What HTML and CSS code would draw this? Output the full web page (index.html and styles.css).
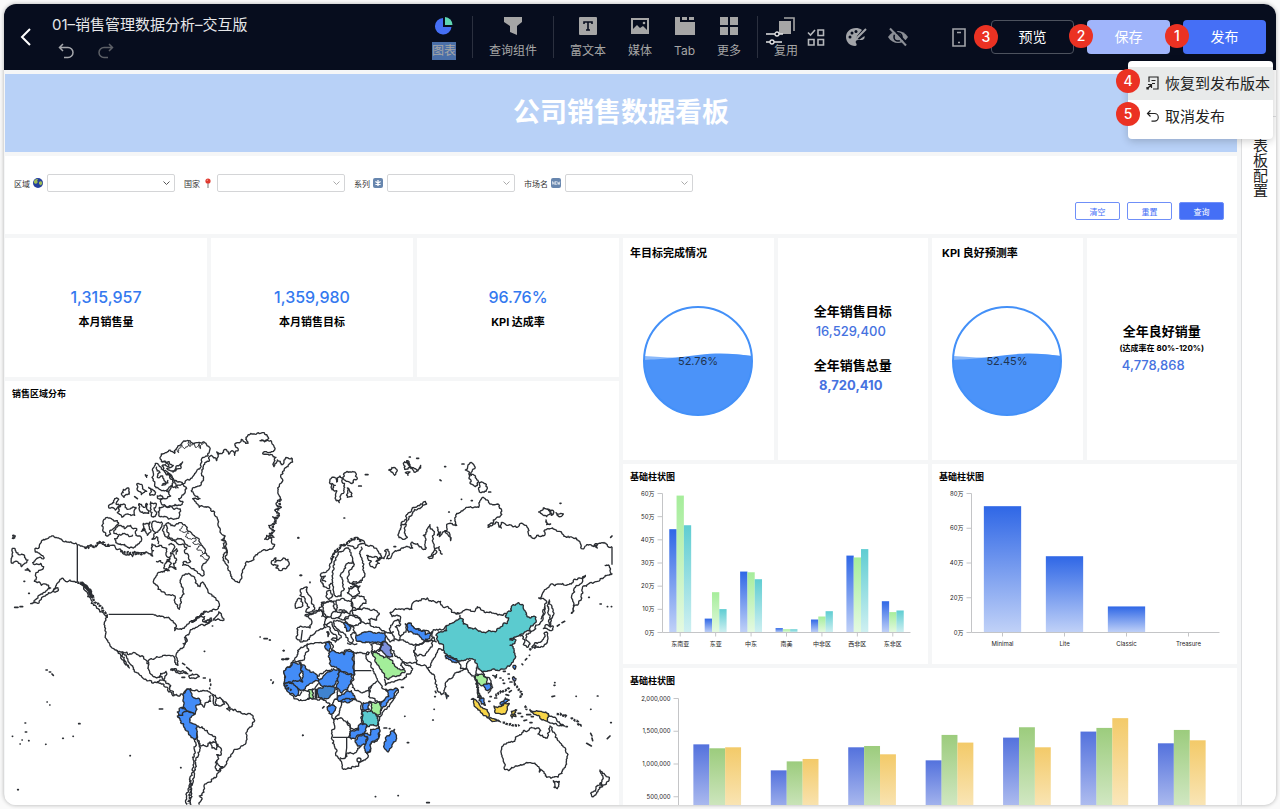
FILE: index.html
```html
<!DOCTYPE html>
<html lang="zh-CN">
<head>
    <meta charset="UTF-8">
    <meta name="viewport" content="width=device-width, initial-scale=1.0">
    <title>01–销售管理数据分析–交互版</title>
    <link rel="stylesheet" href="styles.css">
</head>
<body>
<div class="frame">
    <header class="topbar">
        <button class="back" aria-label="返回"><svg width="12" height="18" viewBox="0 0 12 18"><path d="M10 1 2 9l8 8" fill="none" stroke="#fff" stroke-width="2"/></svg></button>
        <div class="doc">
            <h1>01–销售管理数据分析–交互版</h1>
            <div class="history">
                <button aria-label="撤销"><svg width="16" height="16" viewBox="0 0 16 16"><path d="M5 1 1.500 4.500 5 8M2 4.500h8a5 5 0 0 1 0 10H6" fill="none" stroke="#a6a8ad" stroke-width="1.500"/></svg></button>
                <button aria-label="重做"><svg width="16" height="16" viewBox="0 0 16 16"><path d="M11 1l3.500 3.500L11 8M14 4.500H6a5 5 0 0 0 0 10h4" fill="none" stroke="#5d6067" stroke-width="1.500"/></svg></button>
            </div>
        </div>

        <nav class="tools">
            <div class="group">
                <button class="tool"><svg width="20" height="20" viewBox="0 0 20 20"><path d="M9 2a8.300 8.300 0 1 0 8.500 9H9z" fill="#456ff6"/><path d="M11 1a8 8 0 0 1 7.500 8H11z" fill="#5fd6b4"/></svg><span class="selected">图表</span></button>
            </div>
            <div class="group">
                <button class="tool"><svg width="20" height="20" viewBox="0 0 20 20"><path d="M1 1h18v5l-5 4v9l-7-3v-6L1 6z" fill="#a6a6a6"/></svg><span>查询组件</span></button>
            </div>
            <div class="group">
                <button class="tool"><svg width="20" height="20" viewBox="0 0 20 20"><rect x="1" y="1" width="18" height="18" rx="1" fill="#a6a6a6"/><path d="M6 8V6h8v2M10 6v8M8 14h4" fill="none" stroke="#070d1e" stroke-width="1.600"/></svg><span>富文本</span></button>
                <button class="tool"><svg width="20" height="20" viewBox="0 0 20 20"><rect x="2" y="3" width="16" height="14" fill="none" stroke="#a6a6a6" stroke-width="2"/><path d="M3 13l4-4 3 3 3-2 4 4v3H3z" fill="#a6a6a6"/><circle cx="14" cy="7" r="1.300" fill="#a6a6a6"/></svg><span>媒体</span></button>
                <button class="tool"><svg width="20" height="20" viewBox="0 0 20 20"><path d="M0 1h5v5h15v13H0zM7 1h5v3H7zM14 1h5v3h-5z" fill="#a6a6a6"/></svg><span>Tab</span></button>
                <button class="tool"><svg width="20" height="20" viewBox="0 0 20 20"><path d="M1 1h8v8H1zM11 1h8v8h-8zM1 11h8v8H1zM11 11h8v8h-8z" fill="#a6a6a6"/></svg><span>更多</span></button>
            </div>
            <div class="group reuse">
                <button class="tool"><svg width="20" height="20" viewBox="0 0 20 20"><path d="M3 5h12v13H3z" fill="#a6a6a6"/><path d="M8 2h10v13" fill="none" stroke="#a6a6a6" stroke-width="1.600"/></svg><span>复用</span></button>
                <svg class="sliders" width="17" height="14" viewBox="0 0 17 14"><path d="M0 3h9M13 3h4M0 11h4M8 11h8" stroke="#e4e4e4" stroke-width="1.300"/><circle cx="11" cy="3" r="2" fill="none" stroke="#e4e4e4" stroke-width="1.300"/><circle cx="6" cy="11" r="2" fill="none" stroke="#e4e4e4" stroke-width="1.300"/></svg>
            </div>
            <div class="extras">
                <button aria-label="批量"><svg width="18" height="18" viewBox="0 0 18 18"><path d="M1 4.500 3.500 7 8 2M11 2h5.500v5.500H11zM1.500 11.500H7V17H1.500zM11 11.500h5.500V17H11z" fill="none" stroke="#b6b8bc" stroke-width="1.600"/></svg></button>
                <button aria-label="主题"><svg width="22" height="20" viewBox="0 0 22 20"><path d="M11 1C5 1 1 5 1 10s4 9 9 9c2 0 2-2 1-3s0-3 2-3h3c3 0 4-2 3.500-4l-5 3.500-3-.5.500-3L17 3c-2-1.500-4-2-6-2z" fill="#a2a4a9"/><g fill="#070d1e"><circle cx="5" cy="10" r="1.500"/><circle cx="7" cy="6" r="1.500"/><circle cx="11" cy="4.500" r="1.500"/></g><path d="M21 2 13 10l-1.500 2" fill="none" stroke="#a2a4a9" stroke-width="2"/></svg></button>
                <button aria-label="隐藏"><svg width="22" height="20" viewBox="0 0 22 20"><path d="M1 10c5-8 15-8 20 0-5 8-15 8-20 0z" fill="#8c8f96"/><circle cx="11" cy="10" r="4" fill="none" stroke="#070d1e" stroke-width="1.600"/><path d="M5 .5 21 17.500" stroke="#070d1e" stroke-width="2"/><path d="M3 1.500 19 18.500" stroke="#8c8f96" stroke-width="2"/></svg></button>
            </div>
        </nav>

        <div class="actions">
            <button class="device" aria-label="移动端"><svg width="14" height="19" viewBox="0 0 14 19"><path d="M1 1h12v17H1zM5 4.500h4M6 14.500h2" fill="none" stroke="#a2a4a9" stroke-width="1.600"/></svg></button>
            <button class="action preview">预览<b class="badge">3</b></button>
            <button class="action save">保存<b class="badge">2</b></button>
            <button class="action publish">发布<b class="badge">1</b></button>
        </div>
    </header>

    <div class="menu">
        <button class="menu-item active"><svg width="14" height="14" viewBox="0 0 14 14"><path d="M3 6V1h9v12H7M5.500 4.500h4M6 7.500h3M1 13l4-4M2 8.500h3.500V12M1 11v2h2" fill="none" stroke="#222" stroke-width="1.200"/></svg>恢复到发布版本<b class="badge">4</b></button>
        <button class="menu-item"><svg width="14" height="14" viewBox="0 0 14 14"><path d="M4.500 1.500 1.500 4.500l3 3M2 4.500h6.500a3.800 3.800 0 0 1 0 7.600H5.500" fill="none" stroke="#222" stroke-width="1.200"/></svg>取消发布<b class="badge">5</b></button>
    </div>

    <div class="workspace">
        <main class="board">
            <h2 class="banner">公司销售数据看板</h2>

            <form class="filters card">
                <div class="fields">
                    <div class="field">
                        <label for="region">区域</label>
                        <svg width="10" height="10" viewBox="0 0 10 10"><circle cx="5" cy="5" r="5" fill="#243f9c"/><path d="M1 3c1-2 3-2 4-2l-1 2 1 1-2 2-2-1zM6 4l2-1 1.500 2L8 7.500 6 6z" fill="#9ebc55"/></svg>
                        <span class="pick dark"><select id="region"><option></option></select><svg width="7" height="5" viewBox="0 0 7 5"><path d="M.5.500l3 3 3-3" fill="none" stroke="currentColor"/></svg></span>
                    </div>
                    <div class="field">
                        <label for="country">国家</label>
                        <svg width="10" height="10" viewBox="0 0 10 10"><path d="M5 4v6" stroke="#777"/><circle cx="5" cy="3" r="2.600" fill="#e0392f"/><circle cx="4.300" cy="2.300" r=".8" fill="#f58c84"/></svg>
                        <span class="pick"><select id="country"><option></option></select><svg width="7" height="5" viewBox="0 0 7 5"><path d="M.5.500l3 3 3-3" fill="none" stroke="currentColor"/></svg></span>
                    </div>
                    <div class="field">
                        <label for="series">系列</label>
                        <svg width="10" height="10" viewBox="0 0 10 10"><rect width="10" height="10" rx="2" fill="#6786ae"/><path d="M5 2v6M2.400 3.500l5.200 3M7.600 3.500l-5.200 3" stroke="#fff" stroke-width="1.300"/></svg>
                        <span class="pick"><select id="series"><option></option></select><svg width="7" height="5" viewBox="0 0 7 5"><path d="M.5.500l3 3 3-3" fill="none" stroke="currentColor"/></svg></span>
                    </div>
                    <div class="field">
                        <label for="market">市场名</label>
                        <svg width="10" height="10" viewBox="0 0 10 10"><rect width="10" height="10" rx="2" fill="#6786ae"/><path d="M1.500 6.500v-3l1.700 3v-3M5.800 3.500H4.300v3h1.500M4.300 5h1.300M6.600 3.500l.5 3 .6-2 .6 2 .5-3" fill="none" stroke="#fff" stroke-width=".6"/></svg>
                        <span class="pick"><select id="market"><option></option></select><svg width="7" height="5" viewBox="0 0 7 5"><path d="M.5.500l3 3 3-3" fill="none" stroke="currentColor"/></svg></span>
                    </div>
                </div>
                <div class="form-actions">
                    <button type="button">清空</button>
                    <button type="reset">重置</button>
                    <button type="button" class="primary">查询</button>
                </div>
            </form>

            <div class="columns">
                <div class="column">
                    <div class="kpis">
                        <section class="card kpi"><strong>1,315,957</strong><span>本月销售量</span></section>
                        <section class="card kpi"><strong>1,359,980</strong><span>本月销售目标</span></section>
                        <section class="card kpi"><strong>96.76%</strong><span>KPI 达成率</span></section>
                    </div>
                    <section class="card map-card">
                        <h3>销售区域分布</h3>
                        <svg class="map" viewBox="5 405 614 404">
                            <!-- Americas -->
                            <g transform="translate(0 420) scale(.33333)">
                                <polyline points="37,384 37,430"/>
                                <polyline points="37,384 48,396 56,404 74,408 84,420 72,432 64,440 54,426 46,424 38,432"/>
                                <polygon points="38,346 46,348 44,354 37,355"/>
                                <polyline points="232,374 210,366 192,365 176,354 153,350 140,357 124,364 118,378 105,386 106,396 120,402 132,415 118,412 108,418 98,428 104,434 122,430 131,440 122,450 108,458 108,470 103,484 112,488 118,486 124,496 136,492 146,496 152,504 140,512 128,522 114,534 92,551 104,548 124,538 142,524 156,516 166,504 172,490 180,478 190,476 196,484 210,480 232,487"/>
                                <polygon points="160,514 174,504 172,514"/>
                                <polyline class="heavy" points="240,489 252,495 262,506 270,522 280,532"/>
                                <polyline class="islands" points="232,487 246,493 256,503 270,521 280,535 288,549 298,557 310,573 324,587"/>
                                <polyline points="250,500 262,518 272,534 274,550 286,556 294,566 300,576 312,582 322,594"/>
                                <path d="M232 374V487M326 583H460"/>
                                <polyline points="460,583 480,588 500,592 518,602 526,612 524,632 540,626 560,616 574,602 588,596 604,586 618,576"/>
                                <polyline points="320,584 318,600 314,620 316,646 324,666 336,684 352,692 362,706 372,728 388,744 378,726 366,706 366,696 380,712 392,734 410,758 430,776 452,782 470,788 490,792 502,802 512,816 524,826"/>
                                <polyline points="350,692 368,696 386,704 404,698 420,710 428,708 440,722 446,732"/>
                                <polyline class="islands" points="254,384 272,376 288,378 298,366 314,374 330,376"/>
                                <polyline class="islands" points="362,392 384,396 400,398 420,400 438,396"/>
                                <polyline points="232,374 246,378 258,384 272,376 288,378 298,364 312,374 330,376 346,382 362,388 368,400 392,402 398,410 404,394 424,398 440,396 452,402 458,408 456,372 468,380 484,376 496,384 498,400 508,412 504,424 496,430 492,446 508,452 500,450 482,456 468,470 462,490 474,508 492,516 512,526 526,532 528,552 538,568 544,548 540,534 552,522 550,508 544,494 544,474 556,462 572,464 584,472 586,488 600,500 608,486 616,496 624,514 636,528 648,540 658,552 652,568 636,574 616,574 602,584 588,592 574,606 584,604 602,590 614,590 608,604 624,600 636,594"/>
                                <polygon points="656,576 664,586 672,600 654,596 640,600 650,588"/>
                                <polyline points="636,596 614,606 636,602 622,612 600,616 584,626 570,636 556,650 560,664 552,678 534,692 528,706 534,724 534,736 524,726 520,708 504,706 486,710 470,710 454,716 446,732 448,752 458,768 476,772 482,760 498,754 498,766 492,780 498,790 512,796 512,812 522,824 534,828 548,822"/>
                                <polyline points="470,788 480,780 492,782 486,770 478,774"/>
                                <polyline points="552,652 562,660 556,672 548,670"/>
                                <polygon points="512,750 528,746 548,752 564,762 546,760 526,752"/>
                                <polygon points="566,768 584,764 598,770 582,774"/>
                                <!-- Arctic islands -->
                                <polygon points="480,112 496,98 510,90 524,100 530,84 544,72 566,62 590,68 612,66 628,82 628,96 612,112 604,128 600,146 584,160 576,174 560,180 548,192 534,186 520,176 506,160 490,150 486,138 506,140 498,128 484,124"/>
                                <polyline points="484,124 508,126 520,136 500,146 522,152 548,126 538,146 518,158"/>
                                <polyline class="tick" points="530,84 536,98 546,74 554,86 566,64 570,80 582,68 586,82 598,70 602,86 612,68"/>
                                <polygon points="466,130 480,140 494,156 510,168 520,186 512,200 496,212 478,208 464,194 456,172 458,146"/>
                                <polyline points="470,140 480,158 472,172 488,168 498,188 486,196 504,180"/>
                                <polyline points="500,160 514,178 528,192 536,204"/>
                                <polygon points="500,214 514,196 528,204 546,192 560,206 552,222 536,236 548,244 540,256 518,258 486,254 482,240 500,236 512,228"/>
                                <polygon points="478,262 500,260 522,268 540,266 538,288 516,296 486,290 474,276"/>
                                <polygon points="326,262 344,236 356,238 348,252 360,256 346,270 336,262"/>
                                <polygon points="370,208 386,204 388,222 372,232 364,222"/>
                                <polygon points="356,262 372,252 382,268 408,262 404,286 384,282 366,292 352,278"/>
                                <polygon points="410,192 428,202 440,214 424,224 412,210"/>
                                <polygon points="446,202 458,208 466,222 450,226"/>
                                <polygon points="416,252 430,262 440,250 446,280 428,276 418,268"/>
                                <polygon points="452,246 468,250 462,264 470,282 456,290 450,272"/>
                                <polygon points="472,228 486,228 488,236 474,236"/>
                                <polygon points="436,164 442,166 440,172"/>
                                <polygon points="312,298 330,294 352,302 356,312 340,326 332,342 320,348 308,330"/>
                                <polygon points="344,330 362,316 374,326 392,316 410,326 408,346 424,352 418,370 400,384 378,378 356,372 344,356 356,346 342,340"/>
                                <polyline points="356,344 374,340 388,350 398,344"/>
                                <polygon points="430,310 450,306 452,330 442,346 434,326 424,334"/>
                                <polygon points="460,304 484,306 478,330 466,340 456,322"/>
                                <polyline points="464,340 456,358 470,350 474,372"/>
                                <polygon points="492,316 506,308 524,318 540,308 554,314 562,330 576,342 590,352 600,368 612,384 620,402 628,412 618,428 606,438 612,456 608,468 594,460 582,446 566,438 548,436 552,424 572,424 566,408 554,398 560,382 548,372 536,374 520,360 504,356 492,342"/>
                                <polyline class="tick" points="548,318 538,330 566,340 556,350 588,356 578,368 602,376 590,388 616,400 600,408 622,420"/>
                                <polyline points="500,314 500,330 504,350 524,360 540,356 556,372 572,380"/>
                                <polygon points="500,424 512,398 520,404 530,420 520,430 528,448 506,444 514,430"/>
                                <polyline points="506,376 514,370 524,382 516,396 530,386 528,404"/>
                                <polyline points="468,424 482,422 490,430"/>
                                <!-- Greenland, Iceland -->
                                <polygon points="718,488 704,482 692,468 684,450 676,430 670,404 682,398 668,384 680,372 664,360 676,348 660,336 654,316 652,296 644,276 632,266 616,260 598,262 588,246 578,236 600,236 584,226 574,212 588,200 604,192 610,176 604,160 610,140 626,124 634,106 650,122 650,96 668,98 680,90 686,102 696,92 704,106 714,92 706,70 724,58 744,70 738,52 760,42 782,40 800,44 806,56 780,62 812,62 822,78 824,90 812,98 788,100 812,104 828,112 822,140 832,120 844,134 858,112 874,114 878,126 864,140 848,154 842,170 846,186 838,200 834,214 838,228 844,240 828,250 844,262 824,270 838,280 830,296 818,290 828,310 806,316 824,332 808,340 822,352 800,346 794,358 812,354 824,374 808,388 786,392 766,406 750,424 736,430 732,446 724,466"/>
                                <polyline points="674,350 670,370 680,390 676,410 686,430"/>
                                <polyline class="islands" points="838,240 834,262 834,284 824,306 818,324 806,350"/>
                                <polygon points="816,422 828,414 824,426 838,422 850,414 864,418 868,432 858,446 842,452 828,444 834,436 820,436"/>
                                <!-- South America -->
                                <polyline points="548,824 556,812 572,806 582,812 600,814 622,812 636,822 650,834 668,840 680,850 690,868 706,868 722,876 742,882 758,886 764,902 754,920 742,932 740,954 730,976 708,988 694,1002 682,1022 670,1042 656,1056 650,1070 634,1078 622,1088 612,1100 612,1116 598,1128 606,1138 598,1154"/>
                                <polyline points="586,958 584,990 580,1020 576,1050 570,1080 564,1110 560,1154"/>
                                <polyline points="592,960 598,980 594,1010 586,1050 578,1090 576,1130 574,1154"/>
                                <polyline class="islands" points="572,1080 570,1100 568,1125 566,1150"/>
                                <polygon class="blue" points="548,824 558,812 572,808 576,822 582,834 598,836 600,852 588,856 586,880 570,876 556,866 546,862 552,848"/>
                                <polygon class="blue" points="540,864 556,868 560,876 548,886 536,890 532,876"/>
                                <polygon class="blue" points="532,888 548,886 560,874 572,878 586,882 570,894 570,908 592,918 590,940 588,958 566,944 552,922 540,900"/>
                                <polyline points="600,852 612,862 618,848 632,844 632,826"/>
                                <polyline points="636,824 640,850 650,856 660,858 674,852 668,840"/>
                                <polyline points="650,836 650,856"/>
                                <polyline points="692,862 680,866 690,874"/>
                                <polyline points="592,918 606,920 622,932 636,944 646,950 648,966 630,966 624,978 600,978 592,962 590,940"/>
                                <polyline points="628,970 636,984 650,988 648,966 664,988 664,1002 650,1004 656,1016 646,1030"/>
                                <polygon points="650,1022 668,1040 656,1052 646,1044"/>
                                <path class="specks" d="M138 750h4M148 756h4M156 762l4 4M478 867h10M141 846h1M149 855h1M75 909h2M76 936h4M86 962h1M60 972h1M137 973h1M188 955h2M219 949h1M236 911h4M390 1007h1M542 1043h1M53 1109h2M37 949h1M66 960h1M780 651h1M792 656h10M808 660h1M846 718h6M858 716h8M850 692h2M812 780h2M820 786l-2 4M613 694h1M637 618h1M894 353h2M900 466h3M908 946h1M630 778v6M632 792v4M629 804v2M610 774h6M548 730l6 4M560 742l8 6M570 752h4M546 772h8M44 562h10M60 560h8M76 450h10M72 484h2M86 520h2M82 446l8 8M404 230l8 6"/>
                            </g>
                            <!-- Northern Eurasia -->
                            <g transform="translate(270 420) scale(.33333)">
                                <polygon points="180,178 194,172 200,186 210,168 216,186 224,202 214,222 208,248 196,232 200,212 184,204"/>
                                <polyline points="184,190 196,196 190,210"/>
                                <polygon points="222,160 240,156 258,160 262,176 250,188 232,184 218,174"/>
                                <polygon points="232,204 240,216 246,230 232,232"/>
                                <polygon points="356,150 372,142 382,152 374,166 364,156"/>
                                <polygon points="400,130 414,126 420,140 404,148"/>
                                <polygon points="424,142 440,150 452,136 448,144 432,156"/>
                                <polygon points="406,158 420,156 414,166"/>
                                <polygon points="410,122 420,134 424,146"/>
                                <polygon points="586,150 600,128 614,146 604,166"/>
                                <polygon points="598,166 616,168 626,186 616,200 600,190"/>
                                <polygon points="628,188 640,188 652,206 640,216 628,216"/>
                                <polygon points="384,346 392,316 410,284 430,262 452,252 466,244 470,252 450,266 428,276 414,300 408,318 404,334 412,352 398,358"/>
                                <polyline points="394,316 410,314"/>
                                <polygon points="806,276 820,264 840,272 848,284 830,290 818,284"/>
                                <polygon points="836,268 852,276 844,286"/>
                                <polygon points="858,278 880,282 872,290"/>
                                <polygon points="828,300 842,312 830,314"/>
                                <polyline points="286,376 302,376 320,386 332,402 326,418 306,412 290,406 304,424 300,436 314,444 328,430 318,424 342,416 344,392 354,388 358,402 350,416 376,392 400,384 428,384 426,366 446,376 466,388 468,360 460,346 480,314 490,332 488,360 492,380 498,400 488,414 474,412 486,408 494,388 508,380 518,402"/>
                                <polyline points="500,320 502,346 512,336 508,350 524,332 540,344 542,362 534,344 526,338 530,322 532,312 560,316 558,290 580,270 604,262 626,262 640,232 652,240 660,252 684,252 694,268 690,290 670,300 654,322 680,306 694,324 694,308 714,316 740,322 752,310 768,316 776,344 786,354 800,346 824,346 822,334 840,326 868,334 890,352 918,354 932,372 934,386 950,374 980,376 996,368 1026,380"/>
                                <path d="M1026 380V434"/>
                                <polygon points="972,376 982,372 982,384"/>
                                <polyline points="1004,436 1018,438 1026,462 1000,474 982,484 960,488 940,498 938,520 926,546 904,580 910,556 906,524 916,502 936,488 946,466 930,474 912,478 904,492 888,496 870,492 838,498 820,516 806,534 830,544 824,560 820,580 812,598"/>
                                <polygon points="838,540 846,560 848,590 842,620 836,600 836,570"/>
                                <!-- Scandinavia -->
                                <polyline class="islands" points="186,420 192,400 206,386 222,374 240,362 258,356 276,362"/>
                                <polyline points="152,462 164,458 180,440 186,418 196,396 214,376 232,366 256,352 276,360 288,376 270,372 252,384 232,378"/>
                                <polyline points="152,462 154,486 160,500 176,506 186,490 190,512 198,530 214,528 220,494 212,470 222,450 236,428 250,426 248,440 236,456 232,476 240,490 262,488 284,466 278,440 272,410 274,380"/>
                                <polyline points="186,490 188,452 198,420 206,396 228,384 240,396 246,426"/>
                                <polyline points="152,470 166,468 156,480 168,486"/>
                                <polyline points="276,486 246,492 270,498 240,500"/>
                                <polygon points="170,516 182,512 188,528 176,538 168,530"/>
                                <polygon points="236,504 252,498 266,500 268,520 256,528 240,524 232,518"/>
                                <polygon points="94,506 112,502 110,516 124,534 132,556 134,568 108,576 118,562 106,546 102,530 90,526"/>
                                <polygon points="78,546 94,536 98,552 92,562 76,564"/>
                                <!-- Central Europe -->
                                <polyline points="104,584 124,582 146,568 156,550 174,544 198,544 222,536 242,544 246,570 240,582 210,578 200,570 198,544"/>
                                <polyline points="146,568 158,580 154,590"/>
                                <polygon points="246,536 262,526 282,530 288,550 270,566 248,562"/>
                                <polyline points="360,576 376,566 402,570 426,568 434,544 472,534 496,546 512,544 520,562 556,580 580,572 616,572 622,560 640,572 680,582 708,580"/>
                                <path class="specks" d="M286 164h8M266 198h8M418 111h3M440 115h6M524 140h3M510 180l3 2M576 132h6M574 238h1M604 242h3M536 276h2M542 302h1M372 380h5M656 216h6M870 250h3M1022 352l4-4M84 354h2M92 466h3M120 486v2M222 294h2M956 532h2M990 552h4M1012 560h1M1024 560h1"/>
                            </g>
                            <!-- Africa, Asia, Oceania -->
                            <g transform="translate(270 600) scale(.33333)">
                                <polyline points="104,46 122,44 132,34 154,30 174,50 164,66 168,82 150,88 144,92 122,106 112,122 92,126 82,118 84,82 120,84 124,60 104,46"/>
                                <path d="M97 90l-4 32"/>
                                <polygon points="162,74 182,66 188,80 206,98 214,112 204,120 200,108 182,94 172,80"/>
                                <polygon points="184,118 200,116 196,126"/>
                                <polygon points="170,96 176,96 174,110"/>
                                <polyline points="190,62 196,80 212,96 228,112 238,126 250,122 242,104 258,100 250,80 230,72 214,66 190,62"/>
                                <polyline points="232,128 250,132 262,132"/>
                                <polygon points="154,8 190,4 198,34 182,50 160,46"/>
                                <polyline points="182,50 206,54 214,40 230,34 206,32"/>
                                <polyline points="206,54 220,60 236,56"/>
                                <polygon points="226,52 246,46 262,52 272,70 250,80 234,72"/>
                                <polygon points="246,34 270,28 300,30 328,40 320,60 296,58 300,70 282,68 270,54 250,46"/>
                                <polygon class="blue" points="222,68 236,74 240,90 230,94 224,82"/>
                                <polyline points="300,70 318,80 340,92 356,98 372,96"/>
                                <polygon class="blue" points="258,104 276,98 300,94 324,98 346,98 350,110 346,124 320,128 300,130 280,128 264,124"/>
                                <polygon points="362,76 384,58 392,72 376,80 386,94 392,108 388,122 372,118 368,104 358,86"/>
                                <polyline points="360,36 366,50 392,52 388,68"/>
                                <polyline points="392,108 408,96 406,72 424,70 444,86 466,92 484,98 500,88 520,88 532,76"/>
                                <polygon class="blue" points="406,72 424,70 444,86 460,92 466,104 488,98 480,108 464,122 448,108 428,98 412,88"/>
                                <polyline points="390,120 430,136 462,124 494,112"/>
                                <polygon points="436,140 466,124 494,122 480,146 466,166 442,168 432,152"/>
                                <polyline points="350,112 360,126 374,122"/>
                                <polyline points="350,128 364,146 374,166 392,178 410,190 440,192 434,166 432,150"/>
                                <polyline points="440,192 460,196 472,206 484,188 496,170 506,146 520,150"/>
                                <polyline points="482,100 492,114 500,126"/>
                                <polygon class="purple" points="340,124 350,128 364,146 368,170 352,170 326,154 334,140"/>
                                <polyline points="304,132 340,124 330,150 304,156 302,132"/>
                                <polygon class="green" points="304,154 314,156 308,166"/>
                                <polygon class="green" points="306,162 320,156 352,172 368,182 374,198 400,208 404,218 378,230 356,238 344,232 330,206 316,186"/>
                                <polyline points="344,236 346,256 372,246 404,236 424,216 428,206 410,196 398,188 392,196 404,208"/>
                                <!-- Africa -->
                                <polygon class="land" points="112,132 142,128 172,126 184,128 184,148 204,160 220,158 232,150 252,158 282,160 298,158 290,164 300,186 312,216 322,240 344,268 384,268 374,294 360,314 340,334 326,350 324,368 328,384 328,410 318,424 302,434 302,452 292,462 282,480 266,498 244,506 220,508 216,492 204,472 194,440 186,410 190,388 192,362 186,346 178,330 180,312 166,302 148,300 132,296 112,298 88,302 72,296 60,280 46,266 42,250 44,226 48,206 64,188 74,178 84,162 88,148 102,140"/>
                                <polygon class="blue" points="48,206 66,190 92,188 96,246 60,246 44,250 44,226"/>
                                <polygon class="blue" points="94,194 142,230 146,242 120,250 106,266 90,272 74,262 58,266 46,250 60,246 98,246"/>
                                <polygon class="blue" points="42,250 60,250 84,268 86,286 76,290 50,272"/>
                                <polyline class="islands" points="46,256 56,266 64,272"/>
                                <polyline points="74,182 84,184 94,194"/>
                                <polyline points="84,184 116,152 112,134"/>
                                <polyline points="142,230 186,206"/>
                                <polyline points="100,268 136,262 146,250"/>
                                <polygon class="blue" points="146,240 160,228 190,206 206,208 206,230 196,252 172,260 152,256"/>
                                <polygon class="blue" points="176,160 186,152 204,158 222,164 230,152 250,158 252,224 244,222 206,206 186,200 178,190"/>
                                <polygon class="blue" points="166,130 178,126 182,140 180,156 172,152"/>
                                <polygon class="blue" points="206,208 244,222 242,250 232,270 212,278 200,262 206,230"/>
                                <polygon class="blue" points="204,288 222,282 244,272 258,298 226,304 206,304"/>
                                <polygon class="steel" points="146,264 170,258 196,262 190,280 172,296 160,300 144,292"/>
                                <polygon class="green" points="114,272 128,270 130,296 114,298"/>
                                <path d="M136 266v30M140 266v30M96 274l-8 14"/>
                                <polyline points="196,262 204,288 190,316 172,320"/>
                                <polygon class="blue" points="172,320 190,316 196,330 186,342 174,332"/>
                                <path d="M252 158V212H304"/>
                                <polyline points="252,212 242,250 260,272 300,276 306,256 322,244"/>
                                <polyline points="306,256 296,290 316,304 348,300 368,280 346,270"/>
                                <polygon class="blue" points="350,272 382,266 370,294 350,314 334,332 332,310 356,290"/>
                                <polygon class="green" points="300,304 330,306 332,330 324,346 300,334"/>
                                <polygon class="blue" points="280,308 298,304 298,328 276,330"/>
                                <polygon class="teal" points="276,334 300,334 324,350 322,376 298,380 280,368 274,350"/>
                                <polyline points="214,304 258,300 276,312 276,360 280,376 250,388 236,370 220,360 192,358 208,334 214,304"/>
                                <polyline points="232,362 240,388 236,414"/>
                                <path d="M188 412h48l20 4"/>
                                <polygon class="blue" points="240,394 266,390 272,370 290,376 288,392 270,404 254,416 240,412"/>
                                <polygon class="blue" points="256,420 278,404 292,410 290,434 272,440 258,428"/>
                                <polygon class="blue" points="328,382 326,406 304,426 302,448 290,460 286,434 292,410 280,400 300,406 302,388"/>
                                <path d="M230 414v30l-4 30"/>
                                <polyline points="210,472 226,474 230,460 250,462 272,440"/>
                                <circle cx="267" cy="480" r="6"/>
                                <polygon class="blue" points="374,388 378,404 366,440 354,456 344,446 348,412 362,402"/>
                                <!-- South and East Asia -->
                                <polyline points="472,206 478,212 486,222 494,232 500,262 514,284 524,266 528,246 552,226 576,212 590,206 600,220 614,230 620,262 624,240"/>
                                <polygon class="blue" points="526,278 536,288 530,296"/>
                                <polygon class="blue" points="526,166 548,176 568,182 566,188 546,186 528,176"/>
                                <polyline points="568,188 572,206 588,208 590,190 602,180"/>
                                <polygon class="teal" points="498,106 530,92 532,76 554,64 570,46 580,58 580,72 602,84 622,90 650,96 680,92 694,80 712,70 716,54 706,48 712,36 724,32 730,14 746,8 760,16 766,34 780,54 798,52 796,68 782,78 782,94 764,96 748,106 732,112 720,116 720,120 738,120 728,132 720,136 732,150 736,168 724,192 708,206 684,212 666,208 654,212 630,210 622,192 616,180 596,178 578,182 560,176 536,168 520,150 516,132 502,122"/>
                                <polyline points="570,42 562,38 556,40"/>
                                <polygon class="teal" points="668,226 680,224 676,234"/>
                                <polygon class="blue" points="730,196 738,200 734,208"/>
                                <polyline points="748,106 760,110 764,120 760,134 774,142 780,130 768,116 770,102 790,92 812,66 818,50 824,20"/>
                                <polyline class="islands" points="778,150 788,140 804,142"/>
                                <polyline points="788,138 804,128 820,118 822,100 830,96 834,116 828,132 806,142 790,142"/>
                                <polygon points="820,86 832,74 850,80 840,92"/>
                                <polyline points="618,200 618,214 626,224 620,250 622,280 630,296"/>
                                <polygon class="green" points="616,224 634,222 652,236 650,250 632,256 622,246"/>
                                <polygon class="green" points="620,262 626,278 634,292 624,286"/>
                                <polyline points="634,212 648,232 664,250 668,262 654,280"/>
                                <polygon class="blue" points="640,254 662,252 658,270 646,268"/>
                                <polygon class="blue" points="628,290 642,300 646,316 634,312"/>
                                <polygon class="yellow" points="604,298 620,302 640,326 658,346 652,354 630,332 612,312"/>
                                <polygon class="yellow" points="656,354 680,360 692,366 664,362"/>
                                <polygon class="yellow" points="672,318 692,320 706,308 718,310 712,330 704,342 682,340"/>
                                <polygon class="blue" points="690,312 706,294 718,300 708,308 694,318"/>
                                <polygon class="yellow" points="724,334 740,330 732,340 738,350 728,344 726,354"/>
                                <polygon class="yellow" points="780,328 800,332 832,340 832,364 816,360 806,346 790,340"/>
                                <polyline points="832,340 856,352 868,366 884,378 856,370 832,364"/>
                                <polygon class="purple" points="730,230 738,236 734,250"/>
                                <polyline class="islands" points="734,250 742,262 748,274 756,288 748,290"/>
                                <polyline class="islands" points="676,288 690,278 706,272 718,262"/>
                                <polyline class="islands" points="698,368 722,372 748,374"/>
                                <polyline class="islands" points="860,342 876,348 890,344"/>
                                <polyline class="islands" points="764,318 768,330"/>
                                <polyline class="islands" points="904,352 920,362 936,376"/>
                                <!-- Oceania -->
                                <polygon points="696,440 708,432 734,424 744,408 756,398 774,392 784,382 806,384 812,392 804,402 820,412 832,414 838,390 840,378 848,396 856,412 872,430 886,444 894,464 890,492 876,520 864,532 842,534 826,522 812,508 808,516 806,500 788,490 762,494 740,498 716,512 704,508 702,488 694,460"/>
                                <polygon points="850,542 868,544 862,566 852,562"/>
                                <polygon points="990,510 1004,524 1018,532 1010,546 998,556 998,538"/>
                                <polygon points="992,548 998,560 980,580 966,590 962,580 978,566"/>
                                <path class="specks" d="M470 608h8M412 428h4M404 349h1M98 406h1M488 360h2M492 328h1M494 290h2M496 274l2 4M394 262h6M342 384h8M358 386h2M384 587h1M316 590h1M0 120h1M40 152h2M36 178h6M46 178h8M918 289h1M982 288h2M962 328h1M1022 368h2M852 256h3M854 248h1M846 290l8-2M756 192l2 2M766 180l4-4M778 166h1M862 78l6-4M876 68l8-4M962 400l4 8M966 414l2 8M950 430l14 8M1012 416l8-8M700 214h6M714 222h4M698 240h2M720 246h6M660 290h4M656 304h4M674 294h6M770 344h12M784 350h6M754 350h4M744 340h8M872 374h6M888 380h4M700 250h4M716 236h2M690 234h3M762 362l8-2M780 368h6M708 284l8 2M718 276l6-4M158 324l4-4"/>
                            </g>
                        </svg>
                    </section>
                </div>

                <div class="column">
                    <div class="gauges">
                        <section class="card gauge">
                            <h3>年目标完成情况</h3>
                            <svg viewBox="0 0 112 112"><path d="M2 51C22 52 32 54 56 51S92 49 110 51V60H2z" fill="#8bb9fa"/><path d="M2 55C22 54 32 53 56 50S92 49 110 51V56A54 54 0 0 1 2 56z" fill="#4b93f9"/><circle cx="56" cy="56" r="54" fill="none" stroke="#4390f8" stroke-width="2"/><text x="56" y="60" text-anchor="middle">52.76%</text></svg>
                        </section>
                        <section class="card summary">
                            <h4>全年销售目标</h4>
                            <p>16,529,400</p>
                            <h4 class="second">全年销售总量</h4>
                            <p class="bold">8,720,410</p>
                        </section>
                        <section class="card gauge">
                            <h3 class="inset">KPI 良好预测率</h3>
                            <svg viewBox="0 0 112 112"><path d="M2 51C22 52 32 54 56 51S92 49 110 51V60H2z" fill="#8bb9fa"/><path d="M2 55C22 54 32 53 56 50S92 49 110 51V56A54 54 0 0 1 2 56z" fill="#4b93f9"/><circle cx="56" cy="56" r="54" fill="none" stroke="#4390f8" stroke-width="2"/><text x="56" y="60" text-anchor="middle">52.45%</text></svg>
                        </section>
                        <section class="card summary">
                            <h4>全年良好销量</h4>
                            <small>(达成率在 80%-120%)</small>
                            <p>4,778,868&emsp;</p>
                        </section>
                    </div>
                    <div class="pair">
                        <section class="card"><h3>基础柱状图</h3><svg class="chart" id="chart-area" viewBox="0 0 305 176"></svg></section>
                        <section class="card"><h3>基础柱状图</h3><svg class="chart" id="chart-model" viewBox="0 0 305 176"></svg></section>
                    </div>
                    <section class="card"><h3>基础柱状图</h3><svg class="chart" id="chart-year" viewBox="0 0 614 200"></svg></section>
                </div>
            </div>
        </main>
        <aside class="rail"><button>仪表板配置</button></aside>
    </div>
</div>
<script src="script.js"></script>
</body>
</html>
```
FILE: styles.css
```css
* {
    box-sizing: border-box;
}
body {
    margin: 0;
    padding: 4px;
    height: 100vh;
    background: #fafafa;
    color: #000;
    font-family: Inter, "Noto Sans CJK SC", sans-serif;
    overflow: hidden;
}
h1, h2, h3, h4, p {
    margin: 0;
}
button {
    padding: 0;
    border: 0;
    background: none;
    color: inherit;
    font: inherit;
    cursor: pointer;
}
svg {
    display: block;
}
.frame {
    position: relative;
    display: flex;
    flex-direction: column;
    height: 100%;
    border-radius: 12px;
    background: #f5f6f7;
    box-shadow: 0 0 4px rgba(0, 0, 0, .3);
    overflow: hidden;
}

/* top bar */
.topbar {
    display: flex;
    flex: none;
    align-items: center;
    height: 66px;
    padding: 0 10px 0 16px;
    background: #070d1e;
    color: #a6a6a6;
}
.back {
    width: 12px;
}
.doc {
    width: 384px;
    padding-left: 20px;
}
.doc h1 {
    color: #e6e7e9;
    font-size: 15px;
    font-weight: 400;
    line-height: 18px;
    white-space: nowrap;
}
.history {
    display: flex;
    gap: 24px;
    padding: 9px 0 0 6px;
}
.tools, .extras, .actions {
    display: flex;
    align-items: center;
}
.group {
    position: relative;
    display: flex;
    align-items: center;
    gap: 22px;
    height: 42px;
    padding: 0 16px;
    border-right: 1px solid #2b303f;
}
.reuse {
    padding-right: 9px;
    border-right: 0;
}
.tool {
    display: flex;
    flex-direction: column;
    align-items: center;
    gap: 6px;
    padding-top: 2px;
    font-size: 12px;
    line-height: 18px;
    white-space: nowrap;
}
.selected {
    background: #4a6fa8;
}
.sliders {
    position: absolute;
    left: 8px;
    top: 15px;
}
.extras {
    gap: 20px;
}
.actions {
    gap: 13px;
    margin-left: auto;
}
.device {
    margin-right: 12px;
}
.action {
    position: relative;
    width: 83px;
    height: 34px;
    border-radius: 4px;
    color: #fff;
    font-size: 14px;
    line-height: 30px;
}
.preview {
    border: 1px solid #4d525e;
}
.save {
    background: #a0b5fb;
}
.publish {
    background: #456ff6;
}
.badge {
    position: absolute;
    left: -18px;
    top: 4px;
    width: 24px;
    height: 24px;
    border-radius: 50%;
    background: #eb3223;
    color: #fff;
    font-size: 14px;
    font-weight: 500;
    line-height: 24px;
    text-align: center;
}

/* publish menu */
.menu {
    position: absolute;
    z-index: 2;
    right: 3px;
    top: 57px;
    width: 145px;
    padding: 6px 0;
    border-radius: 4px;
    background: #fff;
    box-shadow: 0 2px 8px rgba(0, 0, 0, .2);
}
.menu-item {
    position: relative;
    display: flex;
    align-items: center;
    gap: 5px;
    width: 100%;
    height: 33px;
    padding: 0 0 2px 18px;
    color: #222;
    font-size: 15px;
    white-space: nowrap;
}
.menu-item svg {
    flex: none;
}
.active {
    background: #e8eaea;
}
.menu-item .badge {
    left: -12px;
    top: 2px;
}

/* board */
.workspace {
    display: flex;
    flex: 1;
    min-height: 0;
}
.board {
    display: flex;
    flex: 1;
    flex-direction: column;
    gap: 4px;
    min-width: 0;
    padding: 4px 4px 0 1px;
}
.rail {
    flex: none;
    width: 35px;
    padding-top: 46px;
    border-left: 1px solid #dedfe1;
    background: #fff;
}
.rail button {
    width: 100%;
    height: 88px;
    border-top: 1px solid #dedfe1;
    color: #222;
    font-size: 15px;
    line-height: 32px;
    writing-mode: vertical-rl;
}
.banner {
    flex: none;
    background: #b8d1f7;
    color: #fff;
    font-size: 27px;
    line-height: 78px;
    text-align: center;
}
.card {
    min-width: 0;
    background: #fff;
    overflow: hidden;
}
.card h3 {
    height: 24px;
    padding: 0 7px;
    font-size: 9px;
    line-height: 26px;
}

/* filter form */
.filters {
    flex: none;
    height: 78px;
    padding: 18px 13px 0 9px;
    color: #333;
    font-size: 8px;
}
.fields {
    display: flex;
    gap: 9px;
}
.field {
    display: flex;
    align-items: center;
    gap: 3px;
}
.pick {
    position: relative;
    margin-left: 1px;
    color: #aaa;
}
.pick.dark {
    color: #555;
}
.pick select {
    display: block;
    width: 128px;
    height: 18px;
    border: 1px solid #d4d5d7;
    border-radius: 2px;
    background: #fff;
    appearance: none;
}
.pick svg {
    position: absolute;
    right: 5px;
    top: 7px;
    pointer-events: none;
}
.form-actions {
    display: flex;
    justify-content: flex-end;
    gap: 7px;
    margin-top: 10px;
}
.form-actions button {
    width: 45px;
    height: 18px;
    border: 1px solid #6f8ff8;
    border-radius: 2px;
    color: #456ff6;
}
.form-actions .primary {
    background: #456ff6;
    color: #fff;
}

/* widgets */
.columns {
    display: grid;
    grid-template-columns: 1fr 1fr;
    flex: 1;
    gap: 4px;
    min-height: 0;
}
.column {
    display: flex;
    flex-direction: column;
    gap: 4px;
    min-width: 0;
}
.kpis, .gauges, .pair {
    display: grid;
    grid-template-columns: repeat(3, 1fr);
    flex: none;
    gap: 4px;
}
.kpis {
    height: 139px;
}
.gauges {
    grid-template-columns: repeat(4, 1fr);
    height: 222px;
}
.pair {
    grid-template-columns: 1fr 1fr;
}
.kpi {
    display: flex;
    flex-direction: column;
    align-items: center;
    justify-content: center;
    gap: 5px;
    padding-top: 4px;
}
.kpi strong {
    color: #3479ef;
    font-size: 16px;
    font-weight: 500;
    line-height: 20px;
}
.kpi span {
    font-size: 11px;
    font-weight: 700;
    line-height: 20px;
}
.map-card {
    flex: 1;
}
.gauge h3 {
    height: 67px;
    font-size: 11px;
    line-height: 31px;
}
.gauge .inset {
    padding-left: 10px;
}
.gauge svg {
    width: 112px;
    margin: 0 auto;
}
.gauge text {
    fill: #1f3350;
    font-size: 11px;
}
.summary {
    display: flex;
    flex-direction: column;
    align-items: center;
    justify-content: center;
}
.summary h4 {
    font-size: 13px;
    line-height: 20px;
}
.summary p {
    padding: 0 4px 2px 0;
    color: #4672e0;
    font-size: 13px;
    font-weight: 500;
    line-height: 20px;
}
.summary .bold {
    font-weight: 700;
}
.summary .second {
    margin-top: 12px;
}
.summary small {
    font-size: 8px;
    font-weight: 700;
    line-height: 14px;
}

/* map */
.map {
    width: 100%;
}
.map g {
    fill: none;
    stroke: #2b2e33;
    stroke-width: 4;
    stroke-linejoin: round;
}
.map .land {
    fill: #fff;
}
.map .blue {
    fill: #438cf7;
}
.map .steel {
    fill: #3f83cf;
}
.map .teal {
    fill: #5bcbcf;
}
.map .green {
    fill: #a3ee9a;
}
.map .yellow {
    fill: #f8d548;
}
.map .purple {
    fill: #7b8fdc;
}
.map .heavy {
    stroke-width: 10;
}
.map .islands {
    stroke-width: 7;
    stroke-dasharray: 7 3;
}
.map .tick {
    stroke-width: 3;
}
.map .specks {
    stroke-width: 5;
    stroke-linecap: round;
}

/* bar charts */
.chart {
    width: 100%;
}
.chart text {
    fill: #222;
    font-size: 6px;
}
.chart .axis {
    fill: none;
    stroke: #c4c5c7;
    stroke-width: 1;
}
```
FILE: script.js
```js
const NS = 'http://www.w3.org/2000/svg';

function add(parent, tag, attrs, text) {
    const node = document.createElementNS(NS, tag);
    for (const key in attrs) node.setAttribute(key, attrs[key]);
    if (text) node.textContent = text;
    parent.appendChild(node);
    return node;
}

function barChart(id, o) {
    const svg = document.getElementById(id);
    const defs = add(svg, 'defs', {});
    o.colors.forEach((c, i) => {
        const grad = add(defs, 'linearGradient', { id: id + i, x1: 0, y1: 0, x2: 0, y2: 1 });
        add(grad, 'stop', { offset: 0, 'stop-color': c });
        add(grad, 'stop', { offset: 1, 'stop-color': c, 'stop-opacity': 0.3 });
    });

    const count = o.series[0].length;
    const band = (o.right - o.left) / count;
    const height = o.bottom - o.top;
    o.series.forEach((values, s) => values.forEach((v, i) => {
        const h = v / o.max * height;
        const x = o.left + band * i + (band - o.bar * o.series.length) / 2 + s * o.bar;
        add(svg, 'rect', { x, y: o.bottom - h, width: o.bar, height: h, fill: `url(#${id}${s})` });
    }));

    let d = `M${o.left} ${o.top}V${o.bottom}H${o.right}`;
    o.ticks.forEach((label, i) => {
        const y = o.bottom - height * i / (o.ticks.length - 1);
        d += `M${o.left - 5} ${y}H${o.left}`;
        if (label) add(svg, 'text', { x: o.left - 8, y: y + 2, 'text-anchor': 'end' }, label);
    });
    (o.labels || []).forEach((label, i) => {
        const x = o.left + band * (i + 0.5);
        d += `M${x} ${o.bottom}v4`;
        add(svg, 'text', { x, y: o.bottom + 13, 'text-anchor': 'middle' }, label);
    });
    add(svg, 'path', { class: 'axis', d });
}

barChart('chart-area', {
    left: 39.5, right: 287.5, top: 5.5, bottom: 144.5, bar: 7.3, max: 60,
    colors: ['#2f67e6', '#a6ed9b', '#5fcdd2'],
    ticks: ['0万', '10万', '20万', '30万', '40万', '50万', '60万'],
    labels: ['东南亚', '东亚', '中东', '南美', '中非区', '西非区', '东非区'],
    series: [
        [44.6, 6, 26.3, 1.9, 5.6, 33.2, 13.5],
        [59.1, 17.4, 26, 1.4, 6.9, 32.4, 8.8],
        [46.3, 10.1, 23, 1.4, 9.2, 36, 9.5]
    ]
});
barChart('chart-model', {
    left: 39.5, right: 287.5, top: 5.5, bottom: 144.5, bar: 37.3, max: 80,
    colors: ['#2f67e6'],
    ticks: ['0万', '20万', '40万', '60万', '80万'],
    labels: ['Minimal', 'Lite', 'Classic', 'Treasure'],
    series: [[72.7, 43.9, 15, 0]]
});
barChart('chart-year', {
    left: 55.5, right: 597.5, top: 6.5, bottom: 137.5, bar: 15.9, max: 2000,
    colors: ['#5472dd', '#9ccc7d', '#f3ca69'],
    ticks: ['', '500,000', '1,000,000', '1,500,000', '2,000,000'],
    series: [
        [1300, 903, 1255, 1056, 1403, 1495, 1316],
        [1240, 1040, 1275, 1444, 1561, 1551, 1520],
        [1255, 1077, 1148, 1327, 1255, 1700, 1362]
    ]
});

// Coastlines are stored coarse. The offset depends only on the midpoint,
// so a border shared by two countries stays shared.
function split(a, b, out) {
    const len = Math.hypot(b[0] - a[0], b[1] - a[1]);
    if (len < 5) {
        out.push(b);
        return;
    }
    const mx = (a[0] + b[0]) / 2;
    const my = (a[1] + b[1]) / 2;
    const amp = Math.min(len * 0.22, 4);
    const mid = [mx + Math.sin(mx * 12.9 + my * 78.2) * amp, my + Math.sin(mx * 39.3 + my * 11.1) * amp];
    split(a, mid, out);
    split(mid, b, out);
}

document.querySelectorAll('.map polygon, .map polyline').forEach(shape => {
    const pts = shape.getAttribute('points').trim().split(/\s+/).map(p => p.split(',').map(Number));
    if (shape.tagName === 'polygon') pts.push(pts[0]);
    const out = [pts[0]];
    for (let i = 1; i < pts.length; i++) split(pts[i - 1], pts[i], out);
    shape.setAttribute('points', out.map(p => p[0].toFixed(1) + ',' + p[1].toFixed(1)).join(' '));
});
```
